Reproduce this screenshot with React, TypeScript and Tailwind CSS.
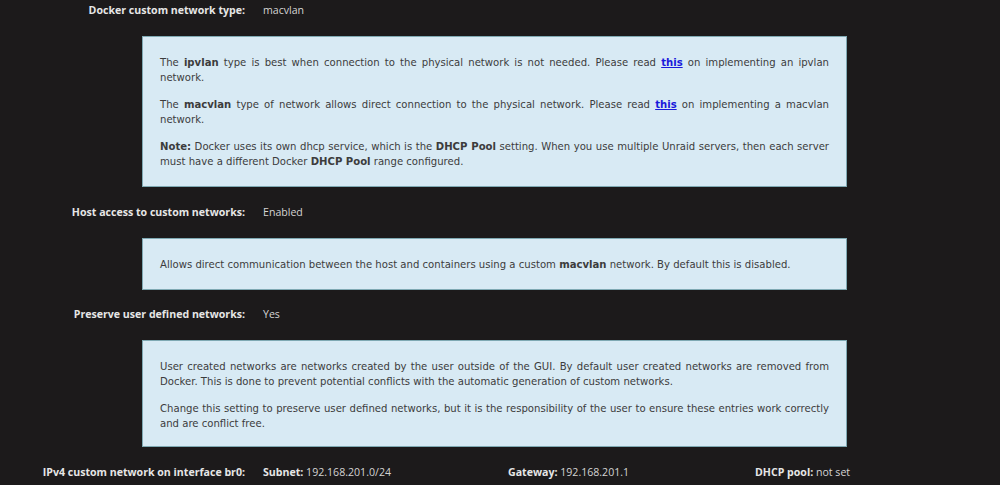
const Row = ({ label, children }: { label: string; children: React.ReactNode }) => (
  <div className="flex h-[22px] items-center">
    <div className="w-[245px] shrink-0 text-right font-bold text-[#e6e6e6]">{label}</div>
    <div className="ml-[18px] flex text-[#d4d4d4]">{children}</div>
  </div>
);

const Info = ({ children, tight }: { children: React.ReactNode; tight?: boolean }) => (
  <div
    className={
      "ml-[142px] w-[705px] border border-[#7fa9b3] bg-[#d8eaf4] px-[17px] pt-[18px] text-justify text-[10.1px] leading-[15px] text-[#3c3c3c] [&>p+p]:mt-[12px] " +
      (tight ? "pb-[15px]" : "pb-[17px]")
    }
    style={{ fontFamily: '"DejaVu Sans", sans-serif' }}
  >
    {children}
  </div>
);

const App = () => {
  return (
    <div
      className="h-[485px] w-[1000px] overflow-hidden bg-[#1c1a1b] text-[10.6px]"
      style={{ fontFamily: '"Open Sans", sans-serif' }}
    >
      <Row label="Docker custom network type:">macvlan</Row>

      <div className="mt-[14px]">
        <Info>
          <p>
            The <b>ipvlan</b> type is best when connection to the physical network is not needed. Please read{" "}
            <a className="font-bold text-[#1a1adb] underline">this</a> on implementing an ipvlan network.
          </p>
          <p>
            The <b>macvlan</b> type of network allows direct connection to the physical network. Please read{" "}
            <a className="font-bold text-[#1a1adb] underline">this</a> on implementing a macvlan network.
          </p>
          <p>
            <b>Note:</b> Docker uses its own dhcp service, which is the <b>DHCP Pool</b> setting. When you use multiple
            Unraid servers, then each server must have a different Docker <b>DHCP Pool</b> range configured.
          </p>
        </Info>
      </div>

      <div className="mt-[15px]">
        <Row label="Host access to custom networks:">Enabled</Row>
      </div>

      <div className="mt-[14px]">
        <Info>
          <p>
            Allows direct communication between the host and containers using a custom <b>macvlan</b> network. By
            default this is disabled.
          </p>
        </Info>
      </div>

      <div className="mt-[14px]">
        <Row label="Preserve user defined networks:">Yes</Row>
      </div>

      <div className="mt-[14px]">
        <Info tight>
          <p>
            User created networks are networks created by the user outside of the GUI. By default user created
            networks are removed from Docker. This is done to prevent potential conflicts with the automatic
            generation of custom networks.
          </p>
          <p>
            Change this setting to preserve user defined networks, but it is the responsibility of the user to ensure
            these entries work correctly and are conflict free.
          </p>
        </Info>
      </div>

      <div className="mt-[15px]">
        <Row label="IPv4 custom network on interface br0:">
          <span className="w-[245px]">
            <b className="text-[#e6e6e6]">Subnet:</b> 192.168.201.0/24
          </span>
          <span className="w-[247px]">
            <b className="text-[#e6e6e6]">Gateway:</b> 192.168.201.1
          </span>
          <span>
            <b className="text-[#e6e6e6]">DHCP pool:</b> not set
          </span>
        </Row>
      </div>
    </div>
  );
};

export default App;
